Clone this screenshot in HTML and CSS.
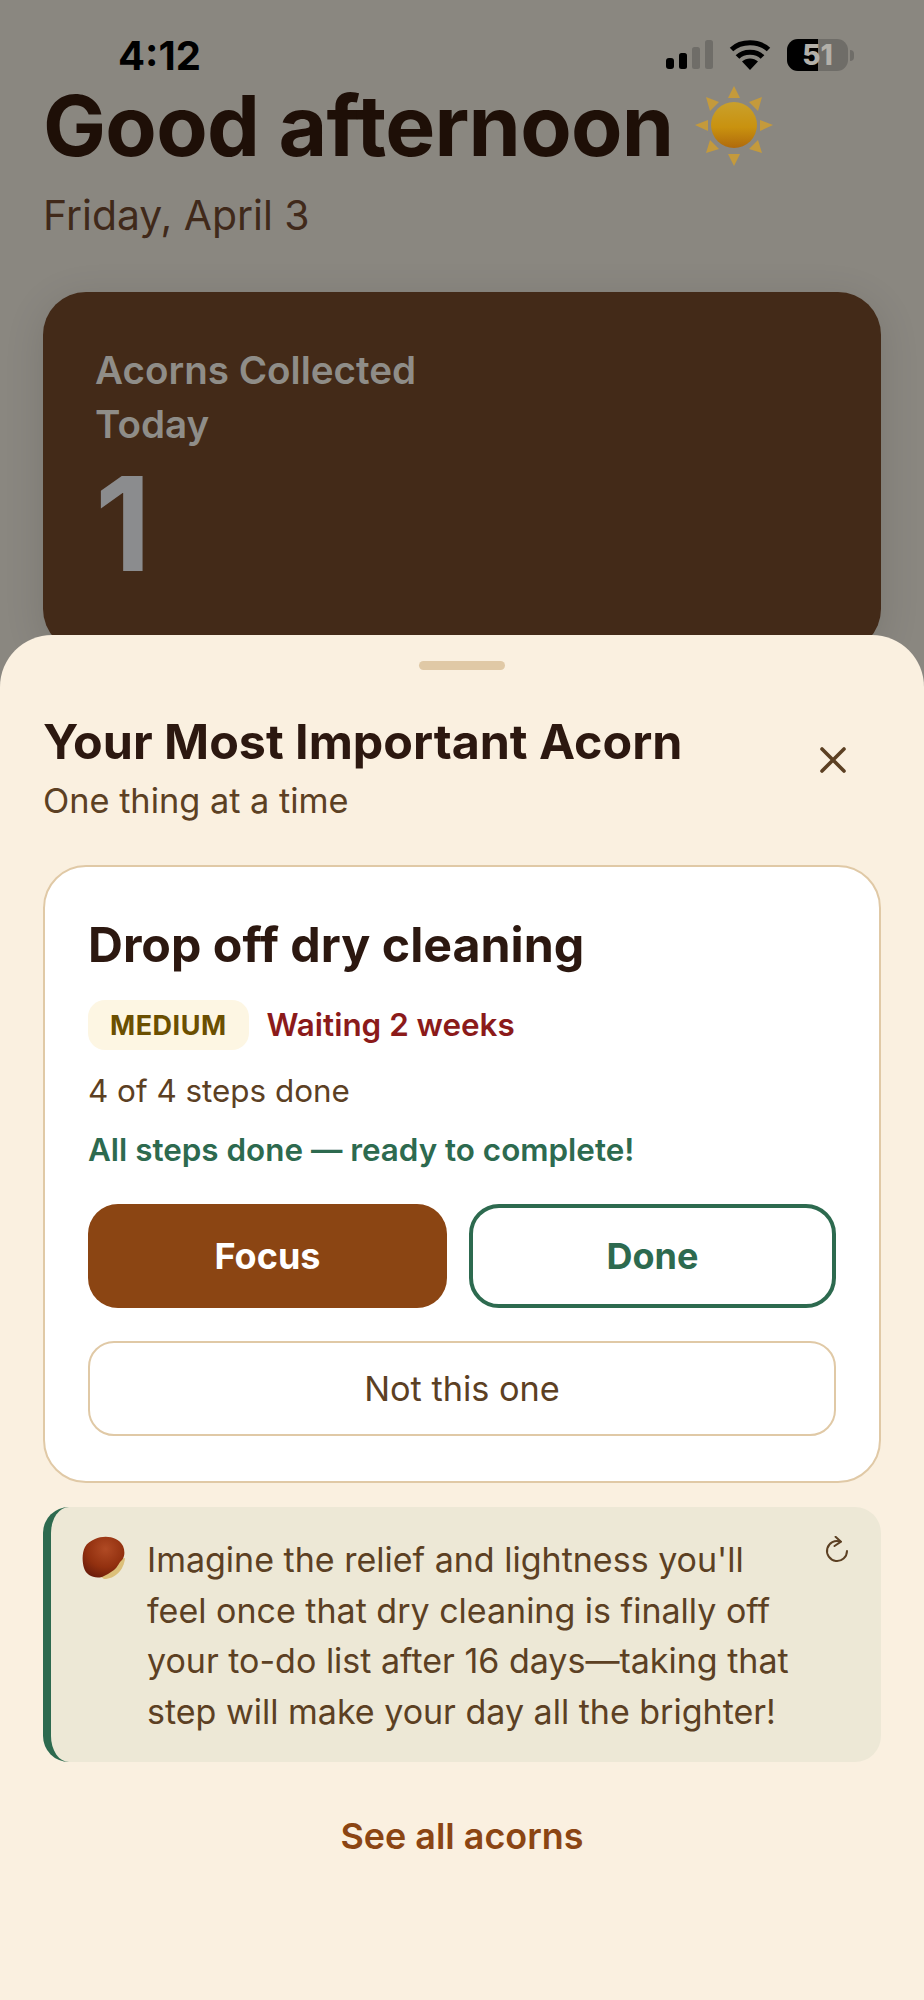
FILE: index.html
```html
<!DOCTYPE html>
<html lang="en">
<head>
    <meta charset="UTF-8">
    <meta name="viewport" content="width=device-width, initial-scale=1.0">
    <title>Acorns</title>
    <link rel="stylesheet" href="styles.css">
</head>
<body>

    <div class="page">
        <div class="status-bar">
            <span class="time">4:12</span>
            <div class="status-icons">
                <svg class="signal" width="47" height="30" viewBox="0 0 47 30">
                    <rect x="0" y="18" width="8" height="11" rx="3" fill="#000"/>
                    <rect x="13" y="13" width="8" height="16" rx="2.5" fill="#000"/>
                    <rect x="26" y="7" width="8" height="22" rx="2.5" fill="#6f6d68"/>
                    <rect x="39" y="0" width="8" height="29" rx="2.5" fill="#6f6d68"/>
                </svg>
                <svg class="wifi" width="42" height="30" viewBox="0 0 42 30">
                    <path d="M21 30 L13 21.5 C17.5 17.5 24.5 17.5 29 21.5 Z" fill="#000"/>
                    <path d="M8.5 17 C14.5 10.5 27.5 10.5 33.5 17" fill="none" stroke="#000" stroke-width="5"/>
                    <path d="M2.5 9.5 C12 0.5 30 0.5 39.5 9.5" fill="none" stroke="#000" stroke-width="5"/>
                </svg>
                <div class="battery">
                    <div class="battery-body">
                        <div class="battery-fill"></div>
                        <span class="battery-text">51</span>
                    </div>
                    <div class="battery-nub"></div>
                </div>
            </div>
        </div>

        <div class="home">
            <h1 class="greeting">Good afternoon
                <svg class="sun" width="78" height="80" viewBox="0 0 78 80">
                    <defs>
                        <linearGradient id="sunFill" x1="0" y1="0" x2="0" y2="1">
                            <stop offset="0" stop-color="#c9a02c"/>
                            <stop offset="0.55" stop-color="#c9920f"/>
                            <stop offset="1" stop-color="#b06a0c"/>
                        </linearGradient>
                    </defs>
                    <g fill="#c49a3c">
                        <polygon points="39,0 45,12 33,12"/>
                        <polygon points="39,80 45,68 33,68"/>
                        <polygon points="0,39 13,34 13,45"/>
                        <polygon points="78,39 65,34 65,45"/>
                        <polygon points="11,11 24,16 15,25"/>
                        <polygon points="67,11 63,25 54,16"/>
                        <polygon points="11,67 15,54 24,63"/>
                        <polygon points="67,67 54,63 63,54"/>
                    </g>
                    <circle cx="39" cy="39" r="23" fill="url(#sunFill)"/>
                </svg>
            </h1>
            <p class="date">Friday, April 3</p>

            <div class="stats-card">
                <div class="stats-label">Acorns Collected<br>Today</div>
                <div class="stats-value">1</div>
            </div>
        </div>

        <div class="sheet">
            <div class="handle"></div>

            <div class="sheet-header">
                <div>
                    <h2>Your Most Important Acorn</h2>
                    <p class="sheet-sub">One thing at a time</p>
                </div>
                <svg class="close" width="28" height="28" viewBox="0 0 28 28">
                    <path d="M3 3 L25 25 M25 3 L3 25" stroke="#5c4023" stroke-width="3.6" stroke-linecap="round"/>
                </svg>
            </div>

            <div class="task-card">
                <h3>Drop off dry cleaning</h3>
                <div class="task-meta">
                    <span class="badge">MEDIUM</span>
                    <span class="waiting">Waiting 2 weeks</span>
                </div>
                <p class="steps">4 of 4 steps done</p>
                <p class="ready">All steps done — ready to complete!</p>
                <div class="actions">
                    <button class="btn btn-focus">Focus</button>
                    <button class="btn btn-done">Done</button>
                </div>
                <button class="btn-skip">Not this one</button>
            </div>

            <div class="tip">
                <svg class="chestnut" width="44" height="44" viewBox="0 0 44 44">
                    <defs>
                        <radialGradient id="nutFill" cx="0.55" cy="0.3" r="0.75">
                            <stop offset="0" stop-color="#b04a24"/>
                            <stop offset="0.6" stop-color="#92300f"/>
                            <stop offset="1" stop-color="#6a1c0b"/>
                        </radialGradient>
                    </defs>
                    <path d="M22 43 C33 43 42 34 43 22 L34 24 L18 40 Z" fill="#dcc07a"/>
                    <path d="M13 3 C22 -1 36 0 41 10 C43 15 43 20 40 24 C37 26 36 31 32 34 C28 37 24 39 20 41 C12 43 4 39 2 32 C0 25 0 17 3 11 C5 7 9 5 13 3 Z" fill="url(#nutFill)"/>
                </svg>
                <p class="tip-text">Imagine the relief and lightness you'll feel once that dry cleaning is finally off your to-do list after 16 days—taking that step will make your day all the brighter!</p>
                <svg class="refresh" width="24" height="27" viewBox="0 0 24 27">
                    <path d="M22 15 A10 10 0 1 1 15.5 5.6" fill="none" stroke="#5c4023" stroke-width="2" stroke-linecap="round"/>
                    <path d="M10.5 0.8 L16 5.7 L9.5 10" fill="none" stroke="#5c4023" stroke-width="2" stroke-linecap="round" stroke-linejoin="round"/>
                </svg>
            </div>

            <a class="see-all">See all acorns</a>
        </div>
    </div>

</body>
</html>
```

FILE: styles.css
```css
* {
    box-sizing: border-box;
}
body {
    font-family: Inter, "Liberation Sans", sans-serif;
    background-color: #8a8780;
    margin: 0;
    padding: 0;
}
h1, h2, h3, p {
    margin: 0;
}
.page {
    position: relative;
    width: 924px;
    height: 2000px;
    overflow: hidden;
}

/* status bar */
.status-bar {
    display: flex;
    justify-content: space-between;
    align-items: center;
    height: 70px;
    padding: 40px 70px 0 118px;
}
.time {
    font-size: 40px;
    font-weight: 700;
    color: #000;
}
.status-icons {
    display: flex;
    align-items: center;
    gap: 16px;
}
.battery {
    display: flex;
    align-items: center;
    gap: 2px;
}
.battery-body {
    position: relative;
    width: 61px;
    height: 32px;
    border-radius: 11px;
    background: #6f6d68;
    overflow: hidden;
    display: flex;
    align-items: center;
    justify-content: center;
}
.battery-fill {
    position: absolute;
    left: 0;
    top: 0;
    bottom: 0;
    width: 31px;
    background: #000;
}
.battery-text {
    position: relative;
    font-size: 28px;
    font-weight: 800;
    color: #b3b0a9;
}
.battery-nub {
    width: 4px;
    height: 11px;
    border-radius: 0 4px 4px 0;
    background: #6f6d68;
}

/* page behind the sheet */
.home {
    padding: 14px 43px 0;
}
.greeting {
    display: flex;
    align-items: center;
    gap: 22px;
    font-size: 84px;
    font-weight: 700;
    line-height: 84px;
    letter-spacing: -0.7px;
    color: #1e0f07;
    white-space: nowrap;
}
.date {
    margin-top: 22px;
    font-size: 40.9px;
    line-height: 50px;
    color: #40291a;
}
.stats-card {
    margin-top: 52px;
    height: 360px;
    padding: 51px 52px;
    background: #432a18;
    border-radius: 43px;
    box-shadow: 0 8px 40px rgba(0, 0, 0, 0.12);
}
.stats-label {
    font-size: 38.6px;
    font-weight: 600;
    line-height: 54px;
    color: #8f8d88;
}
.stats-value {
    margin-top: -2px;
    font-size: 130px;
    font-weight: 700;
    line-height: 150px;
    color: #8b8c8e;
}

/* bottom sheet */
.sheet {
    position: absolute;
    left: 0;
    right: 0;
    top: 635px;
    bottom: 0;
    padding: 26px 43px 0;
    background: #faf0e0;
    border-radius: 52px 52px 0 0;
}
.handle {
    width: 86px;
    height: 9px;
    margin: 0 auto;
    border-radius: 5px;
    background: #e0c9a6;
}
.sheet-header {
    display: flex;
    justify-content: space-between;
    align-items: flex-start;
    margin-top: 44px;
    padding-right: 34px;
}
.sheet-header h2 {
    font-size: 48.4px;
    font-weight: 700;
    line-height: 56px;
    color: #2c1810;
}
.sheet-sub {
    margin-top: 9px;
    font-size: 34.3px;
    line-height: 44px;
    color: #5c4023;
}
.close {
    margin-top: 32px;
}

.task-card {
    margin-top: 42px;
    height: 618px;
    padding: 48px 43px 0;
    background: #fff;
    border: 2px solid #e0c9a6;
    border-radius: 43px;
}
.task-card h3 {
    font-size: 48.3px;
    font-weight: 700;
    line-height: 60px;
    color: #2c1810;
}
.task-meta {
    display: flex;
    align-items: center;
    gap: 18px;
    margin-top: 25px;
}
.badge {
    display: flex;
    align-items: center;
    height: 50px;
    padding: 0 22px;
    border-radius: 17px;
    background: #fdf6e3;
    font-size: 27px;
    font-weight: 700;
    letter-spacing: 0.5px;
    color: #6b4f00;
}
.waiting {
    font-size: 31.4px;
    font-weight: 600;
    color: #8b1a1a;
}
.steps {
    margin-top: 23px;
    font-size: 31.4px;
    line-height: 36px;
    color: #5c4023;
}
.ready {
    margin-top: 23px;
    font-size: 31.4px;
    font-weight: 600;
    line-height: 36px;
    color: #2d6a4f;
}
.actions {
    display: flex;
    gap: 22px;
    margin-top: 36px;
}
.btn {
    flex: 1;
    height: 104px;
    border-radius: 30px;
    font-family: inherit;
    font-size: 36px;
    font-weight: 700;
}
.btn-focus {
    border: none;
    background: #8b4513;
    color: #fff;
}
.btn-done {
    border: 4px solid #2d6a4f;
    background: #fff;
    color: #2d6a4f;
}
.btn-skip {
    display: block;
    width: 100%;
    height: 95px;
    margin-top: 33px;
    border: 2px solid #e0c9a6;
    border-radius: 26px;
    background: #fff;
    font-family: inherit;
    font-size: 34.3px;
    color: #5c4023;
}

.tip {
    display: flex;
    align-items: flex-start;
    margin-top: 24px;
    height: 255px;
    padding: 28px 32px 0 31px;
    background: #ede8d6;
    border-left: 8px solid #2d6a4f;
    border-radius: 26px;
}
.chestnut {
    flex: none;
    margin-top: 1px;
}
.tip-text {
    flex: 1;
    margin-left: 21px;
    font-size: 34px;
    line-height: 50.5px;
    color: #5c4023;
}
.refresh {
    flex: none;
    margin: 1px 0 0 18px;
}
.see-all {
    display: block;
    margin-top: 49px;
    text-align: center;
    font-size: 35.9px;
    font-weight: 600;
    line-height: 50px;
    color: #8b4513;
}
```
